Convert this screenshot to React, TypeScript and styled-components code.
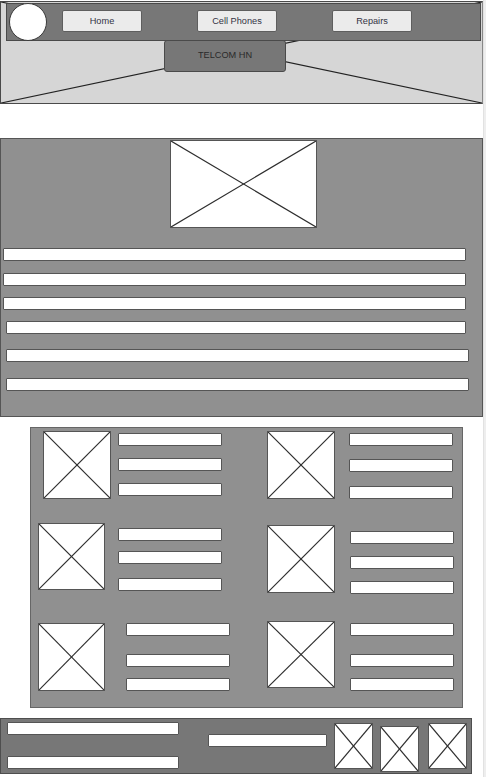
import styled, { createGlobalStyle } from "styled-components";

const GlobalStyle = createGlobalStyle`
	html, body {
		margin: 0;
		padding: 0;
		background: #ffffff;
	}
	body {
		font-family: "Liberation Sans", Arial, sans-serif;
	}
`;

const Page = styled.div`
	display: flex;
	width: 486px;
	min-height: 777px;
`;

const Main = styled.div`
	display: flex;
	flex-direction: column;
	width: 483px;
	padding-top: 1px;
`;

const Gutter = styled.div`
	width: 3px;
	background: #eeeeee;
	border-left: 1px solid #e2e2e2;
`;

const Cross = ({ color = "#2e2e2e" }: { color?: string }) => (
	<svg width="100%" height="100%" preserveAspectRatio="none" viewBox="0 0 100 100" style={{ position: "absolute", inset: 0 }}>
		<line x1="0" y1="0" x2="100" y2="100" stroke={color} strokeWidth="1.2" vectorEffect="non-scaling-stroke" />
		<line x1="0" y1="100" x2="100" y2="0" stroke={color} strokeWidth="1.2" vectorEffect="non-scaling-stroke" />
	</svg>
);

const Header = styled.header`
	position: relative;
	box-sizing: border-box;
	display: flex;
	flex-direction: column;
	width: 483px;
	height: 103px;
	padding: 1px 1px 0 5px;
	background: #d6d6d6;
	border: 1px solid #4a4a4a;
	border-right-color: #888;
`;

const NavBar = styled.nav`
	position: relative;
	box-sizing: border-box;
	display: flex;
	align-items: center;
	height: 38px;
	padding-left: 2px;
	background: #777777;
	border: 1px solid #4a4a4a;
	z-index: 1;
`;

const Logo = styled.div`
	box-sizing: border-box;
	width: 38px;
	height: 38px;
	margin-top: -1px;
	border-radius: 50%;
	background: #ffffff;
	border: 1px solid #3a3a3a;
	margin-right: 15px;
`;

const NavLinks = styled.div`
	display: flex;
	gap: 55px;
	margin-top: -2px;
`;

const NavButton = styled.button`
	box-sizing: border-box;
	width: 80px;
	height: 22px;
	padding: 0;
	background: #ebebeb;
	border: 1px solid #5e5e5e;
	border-radius: 2px;
	color: #333344;
	font-family: "Liberation Sans", Arial, sans-serif;
	font-size: 9.2px;
	cursor: pointer;
`;

const Title = styled.div`
	position: relative;
	box-sizing: border-box;
	display: flex;
	align-items: center;
	justify-content: center;
	width: 122px;
	height: 32px;
	margin: -1px 0 0 158px;
	padding-bottom: 3px;
	background: #777777;
	border: 1px solid #4a4a4a;
	border-radius: 3px;
	color: #2a2a2a;
	font-size: 9.2px;
	z-index: 1;
`;

const Hero = styled.section`
	box-sizing: border-box;
	display: flex;
	flex-direction: column;
	width: 483px;
	height: 279px;
	margin-top: 34px;
	background: #909090;
	border: 1px solid #555555;
`;

const Placeholder = styled.div<{ w: number; h: number; ml?: number; mt?: number }>`
	position: relative;
	flex: none;
	box-sizing: border-box;
	width: ${(p) => p.w}px;
	height: ${(p) => p.h}px;
	margin-left: ${(p) => p.ml ?? 0}px;
	margin-top: ${(p) => p.mt ?? 0}px;
	background: #ffffff;
	border: 1px solid #555555;
`;

const Bar = styled.div<{ w: number; ml?: number; mt?: number }>`
	flex: none;
	box-sizing: border-box;
	width: ${(p) => p.w}px;
	height: 13px;
	margin-left: ${(p) => p.ml ?? 0}px;
	margin-top: ${(p) => p.mt ?? 0}px;
	background: #ffffff;
	border: 1px solid #555555;
	border-radius: 1px;
`;

const heroBars = [
	{ ml: 2, w: 463, mt: 20 },
	{ ml: 2, w: 463, mt: 12 },
	{ ml: 2, w: 463, mt: 11 },
	{ ml: 5, w: 460, mt: 11 },
	{ ml: 5, w: 463, mt: 15 },
	{ ml: 5, w: 463, mt: 16 },
];

const Products = styled.section`
	box-sizing: border-box;
	display: flex;
	flex-direction: column;
	width: 433px;
	height: 281px;
	margin: 10px 0 0 30px;
	background: #909090;
	border: 1px solid #666666;
`;

const ProductRow = styled.div<{ h: number }>`
	display: grid;
	grid-template-columns: 224px 1fr;
	height: ${(p) => p.h}px;
`;

const Product = styled.div`
	display: flex;
	align-items: flex-start;
`;

const BarStack = styled.div<{ ml: number }>`
	display: flex;
	flex-direction: column;
	margin-left: ${(p) => p.ml}px;
`;

type Item = { ml: number; mt: number; w: number; h: number; gap: number; tops: number[] };

const rows: { h: number; items: Item[] }[] = [
	{
		h: 90,
		items: [
			{ ml: 12, mt: 3, w: 68, h: 68, gap: 7, tops: [5, 12, 12] },
			{ ml: 12, mt: 3, w: 68, h: 68, gap: 14, tops: [5, 13, 14] },
		],
	},
	{
		h: 97,
		items: [
			{ ml: 7, mt: 5, w: 67, h: 67, gap: 13, tops: [10, 10, 14] },
			{ ml: 12, mt: 7, w: 68, h: 68, gap: 15, tops: [13, 12, 12] },
		],
	},
	{
		h: 92,
		items: [
			{ ml: 7, mt: 8, w: 67, h: 68, gap: 21, tops: [8, 18, 11] },
			{ ml: 12, mt: 6, w: 68, h: 67, gap: 15, tops: [8, 18, 11] },
		],
	},
];

const Footer = styled.footer`
	box-sizing: border-box;
	display: flex;
	align-items: flex-start;
	width: 472px;
	height: 56px;
	margin-top: 10px;
	padding-left: 6px;
	background: #777777;
	border: 1px solid #4e4e4e;
`;

const FooterCol = styled.div`
	display: flex;
	flex-direction: column;
`;

export default function App() {
	return (
		<>
			<GlobalStyle />
			<Page>
				<Main>
					<Header>
						<Cross color="#222" />
						<NavBar>
							<Logo />
							<NavLinks>
								<NavButton>Home</NavButton>
								<NavButton>Cell Phones</NavButton>
								<NavButton>Repairs</NavButton>
							</NavLinks>
						</NavBar>
						<Title>TELCOM HN</Title>
					</Header>

					<Hero>
						<Placeholder w={147} h={88} ml={169} mt={1}>
							<Cross />
						</Placeholder>
						{heroBars.map((b, i) => (
							<Bar key={i} w={b.w} ml={b.ml} mt={b.mt} />
						))}
					</Hero>

					<Products>
						{rows.map((row, r) => (
							<ProductRow key={r} h={row.h}>
								{row.items.map((it, i) => (
									<Product key={i}>
										<Placeholder w={it.w} h={it.h} ml={it.ml} mt={it.mt}>
											<Cross />
										</Placeholder>
										<BarStack ml={it.gap}>
											{it.tops.map((t, k) => (
												<Bar key={k} w={104} mt={t} />
											))}
										</BarStack>
									</Product>
								))}
							</ProductRow>
						))}
					</Products>

					<Footer>
						<FooterCol>
							<Bar w={172} mt={3} />
							<Bar w={172} mt={21} />
						</FooterCol>
						<Bar w={119} ml={29} mt={15} />
						<Placeholder w={39} h={46} ml={7} mt={4}>
							<Cross />
						</Placeholder>
						<Placeholder w={39} h={46} ml={7} mt={7}>
							<Cross />
						</Placeholder>
						<Placeholder w={39} h={46} ml={9} mt={4}>
							<Cross />
						</Placeholder>
					</Footer>
				</Main>
				<Gutter />
			</Page>
		</>
	);
}
